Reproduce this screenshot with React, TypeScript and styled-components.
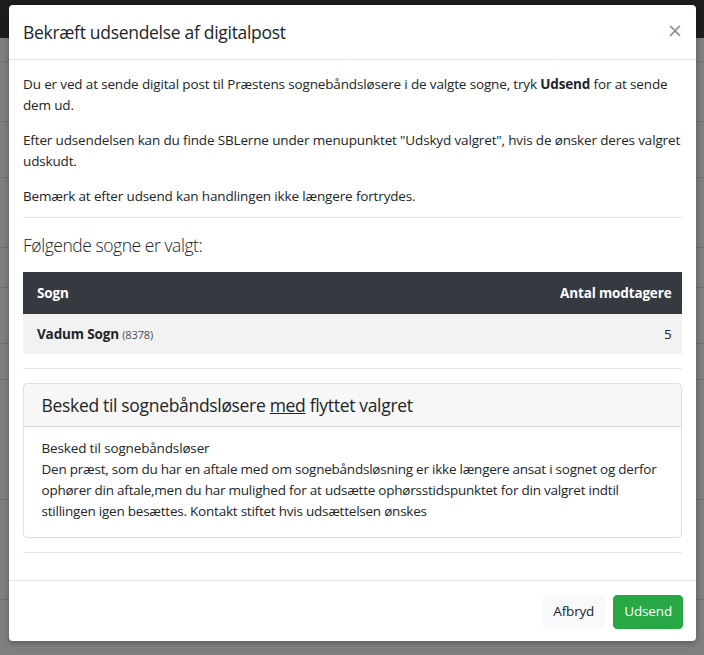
import React from 'react'
import styled, { createGlobalStyle } from 'styled-components'

const GlobalStyle = createGlobalStyle`
    * { box-sizing: border-box; }
    html, body { margin: 0; padding: 0; }
    body {
        font-family: "Open Sans", "Noto Sans", sans-serif;
        font-size: 13.5px;
        line-height: 21px;
        letter-spacing: -0.15px;
        color: #212529;
        background: #808080;
        overflow: hidden;
    }
`

// the page behind the modal, only its edges show
const Page = styled.div`
    position: relative;
    width: 704px;
    height: 655px;
    background: #fff;
`

const PageNav = styled.div`
    height: 38px;
    background: #3a3a3a;
`

const PageRow = styled.div<{ h: number }>`
    height: ${p => p.h}px;
    border-bottom: 1px solid #dee2e6;
`

const Backdrop = styled.div`
    position: absolute;
    inset: 0;
    background: rgba(0, 0, 0, 0.5);
`

const Dialog = styled.div`
    position: absolute;
    left: 9px;
    top: 5px;
    width: 687px;
    background: #fff;
    border-radius: 4px;
    box-shadow: 0 2px 6px rgba(0, 0, 0, 0.3);
    display: flex;
    flex-direction: column;
`

const Header = styled.div`
    display: flex;
    align-items: flex-start;
    justify-content: space-between;
    padding: 14px;
    border-bottom: 1px solid #dee2e6;
`

const Title = styled.h5`
    margin: 0;
    font-size: 17.5px;
    font-weight: 500;
    line-height: 26px;
    letter-spacing: -0.3px;
`

const Close = styled.button`
    border: 0;
    background: transparent;
    padding: 14px 13px;
    margin: -12px -14px -14px auto;
    font-family: "DejaVu Sans", sans-serif;
    font-size: 19px;
    font-weight: 400;
    line-height: 1;
    color: #000;
    opacity: 0.45;
    cursor: pointer;
`

const Body = styled.div`
    padding: 14px;
`

const P = styled.p<{ tight?: boolean }>`
    margin: 0 0 ${p => (p.tight ? 10 : 14)}px;
`

const Hr = styled.hr`
    margin: 10px 0 13px;
    border: 0;
    border-top: 1px solid rgba(0, 0, 0, 0.1);
`

const Lead = styled.p`
    margin: 0 0 13px;
    font-size: 17.5px;
    line-height: 28px;
    font-weight: 300;
    letter-spacing: -0.45px;
`

const Table = styled.table`
    width: 100%;
    border-collapse: collapse;
    margin-bottom: 14px;
`

const Th = styled.th<{ right?: boolean }>`
    background: #343a40;
    color: #fff;
    font-weight: 700;
    text-align: ${p => (p.right ? 'right' : 'left')};
    padding: 11px 10.5px 10px;
    &:first-child { padding-left: 14px; }
`

const Td = styled.td<{ right?: boolean }>`
    background: #f2f2f2;
    text-align: ${p => (p.right ? 'right' : 'left')};
    padding: 9.5px 10.5px;
    &:first-child { padding-left: 14px; }
`

const Small = styled.small`
    font-size: 11px;
    font-weight: 400;
    color: #495057;
`

const Card = styled.div`
    border: 1px solid rgba(0, 0, 0, 0.125);
    border-radius: 4px;
    margin: 14px 0;
`

const CardHeader = styled.div`
    background: rgba(0, 0, 0, 0.03);
    border-bottom: 1px solid rgba(0, 0, 0, 0.125);
    padding: 10.5px 17.5px;
    font-size: 17.5px;
    font-weight: 500;
    line-height: 21px;
    letter-spacing: -0.32px;
`

const CardBody = styled.div`
    padding: 10.5px 17.5px 15px;
    letter-spacing: -0.23px;
`

const MsgTitle = styled.div`
    font-weight: 500;
    letter-spacing: -0.15px;
`

const Footer = styled.div`
    display: flex;
    justify-content: flex-end;
    gap: 8px;
    padding: 14px 13px 12px;
    border-top: 1px solid #dee2e6;
`

const Button = styled.button<{ variant: 'light' | 'success' }>`
    font-family: inherit;
    font-size: 13.5px;
    line-height: 21px;
    letter-spacing: -0.15px;
    padding: 5.5px 10px;
    border: 1px solid ${p => (p.variant === 'success' ? '#28a745' : '#f8f9fa')};
    border-radius: 4px;
    background: ${p => (p.variant === 'success' ? '#28a745' : '#f8f9fa')};
    color: ${p => (p.variant === 'success' ? '#fff' : '#212529')};
    cursor: pointer;
`

export default function App() {
    return (
        <>
            <GlobalStyle />
            <Page>
                <PageNav />
                <PageRow h={24} />
                <PageRow h={60} />
                <PageRow h={56} />
                <PageRow h={70} />
                <PageRow h={40} />
                <PageRow h={56} />
                <PageRow h={36} />
                <PageRow h={120} />
                <PageRow h={100} />
                <Backdrop />
                <Dialog>
                    <Header>
                        <Title>Bekræft udsendelse af digitalpost</Title>
                        <Close aria-label="Luk">×</Close>
                    </Header>
                    <Body>
                        <P>
                            Du er ved at sende digital post til Præstens sognebåndsløsere i de valgte sogne, tryk <b>Udsend</b> for at sende dem ud.
                        </P>
                        <P>
                            Efter udsendelsen kan du finde SBLerne under menupunktet "Udskyd valgret", hvis de ønsker deres valgret udskudt.
                        </P>
                        <P tight>Bemærk at efter udsend kan handlingen ikke længere fortrydes.</P>
                        <Hr />
                        <Lead>Følgende sogne er valgt:</Lead>
                        <Table>
                            <thead>
                                <tr>
                                    <Th>Sogn</Th>
                                    <Th right>Antal modtagere</Th>
                                </tr>
                            </thead>
                            <tbody>
                                <tr>
                                    <Td><b>Vadum Sogn</b> <Small>(8378)</Small></Td>
                                    <Td right>5</Td>
                                </tr>
                            </tbody>
                        </Table>
                        <Hr />
                        <Card>
                            <CardHeader>
                                Besked til sognebåndsløsere <u>med</u> flyttet valgret
                            </CardHeader>
                            <CardBody>
                                <MsgTitle>Besked til sognebåndsløser</MsgTitle>
                                Den præst, som du har en aftale med om sognebåndsløsning er ikke længere ansat i sognet og derfor ophører din aftale,men du har mulighed for at udsætte ophørsstidspunktet for din valgret indtil stillingen igen besættes. Kontakt stiftet hvis udsættelsen ønskes
                            </CardBody>
                        </Card>
                        <Hr />
                    </Body>
                    <Footer>
                        <Button variant="light">Afbryd</Button>
                        <Button variant="success">Udsend</Button>
                    </Footer>
                </Dialog>
            </Page>
        </>
    )
}
